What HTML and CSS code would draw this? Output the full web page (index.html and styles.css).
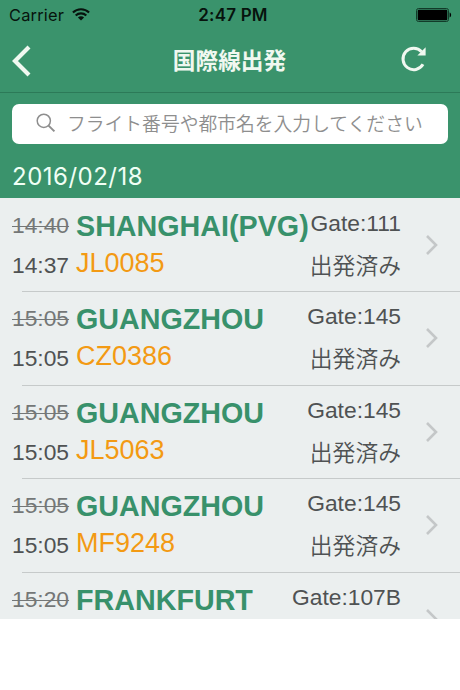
FILE: index.html
```html
<!DOCTYPE html>
<html lang="ja">
<head>
<meta charset="UTF-8">
<meta name="viewport" content="width=device-width, initial-scale=1.0">
<title>国際線出発</title>
<link rel="stylesheet" href="styles.css">
</head>
<body>
  <header>
    <div class="status-bar">
      <div class="carrier">
        <span>Carrier</span>
        <svg class="wifi" width="18" height="13" viewBox="0 0 18 13" fill="none" stroke="#07130d" stroke-width="2.1">
          <path d="M0.9 4.6a11.6 11.6 0 0 1 16.2 0"/>
          <path d="M3.7 7.5a7.6 7.6 0 0 1 10.6 0"/>
          <path d="M9 12.6L5.9 9.6a4.4 4.4 0 0 1 6.2 0z" fill="#07130d" stroke="none"/>
        </svg>
      </div>
      <span class="clock">2:47 PM</span>
      <svg class="battery" width="36" height="14" viewBox="0 0 36 14">
        <rect x="0.5" y="0.5" width="32" height="13" rx="2" fill="none" stroke="#123b29"/>
        <rect x="1.7" y="1.7" width="29.6" height="10.6" rx="1" fill="#000"/>
        <path d="M33.6 4.6c2 .6 2 4.2 0 4.8z" fill="#000"/>
      </svg>
    </div>
    <div class="nav-bar">
      <svg class="back" width="20" height="32" viewBox="0 0 20 32" fill="none" stroke="#f0f8f0" stroke-width="4.2">
        <path d="M18 2L4 16l14 14"/>
      </svg>
      <h1>国際線出発</h1>
      <svg class="refresh" width="28" height="28" viewBox="0 0 28 28" fill="none" stroke="#f0f8f0" stroke-width="3">
        <path d="M23 19.3A10.7 10.7 0 1 1 21.6 6.7"/>
        <path d="M25.6 2.2v8.2h-8.2z" fill="#f0f8f0" stroke="none"/>
      </svg>
    </div>
  </header>

  <div class="search-section">
    <div class="search-box">
      <svg width="20" height="20" viewBox="0 0 20 20" fill="none" stroke="#8e8e8e">
        <circle cx="7.8" cy="7.8" r="6.6" stroke-width="1.5"/>
        <path d="M12.6 12.6l5.8 5.8" stroke-width="2"/>
      </svg>
      <span>フライト番号や都市名を入力してください</span>
    </div>
  </div>
  <div class="date">2016/02/18</div>

  <div class="flight-list">
    <div class="flight">
      <div class="times"><s>14:40</s><span>14:37</span></div>
      <div class="info"><span class="city">SHANGHAI(PVG)</span><span class="number">JL0085</span></div>
      <div class="gate"><span>Gate:111</span><span class="state">出発済み</span></div>
      <svg class="arrow" width="14" height="22" viewBox="0 0 14 22"><path d="M2 2l9 9-9 9"/></svg>
    </div>
    <div class="flight">
      <div class="times"><s>15:05</s><span>15:05</span></div>
      <div class="info"><span class="city">GUANGZHOU</span><span class="number">CZ0386</span></div>
      <div class="gate"><span>Gate:145</span><span class="state">出発済み</span></div>
      <svg class="arrow" width="14" height="22" viewBox="0 0 14 22"><path d="M2 2l9 9-9 9"/></svg>
    </div>
    <div class="flight">
      <div class="times"><s>15:05</s><span>15:05</span></div>
      <div class="info"><span class="city">GUANGZHOU</span><span class="number">JL5063</span></div>
      <div class="gate"><span>Gate:145</span><span class="state">出発済み</span></div>
      <svg class="arrow" width="14" height="22" viewBox="0 0 14 22"><path d="M2 2l9 9-9 9"/></svg>
    </div>
    <div class="flight">
      <div class="times"><s>15:05</s><span>15:05</span></div>
      <div class="info"><span class="city">GUANGZHOU</span><span class="number">MF9248</span></div>
      <div class="gate"><span>Gate:145</span><span class="state">出発済み</span></div>
      <svg class="arrow" width="14" height="22" viewBox="0 0 14 22"><path d="M2 2l9 9-9 9"/></svg>
    </div>
    <div class="flight">
      <div class="times"><s>15:20</s></div>
      <div class="info"><span class="city">FRANKFURT</span></div>
      <div class="gate"><span>Gate:107B</span></div>
      <svg class="arrow" width="14" height="22" viewBox="0 0 14 22"><path d="M2 2l9 9-9 9"/></svg>
    </div>
  </div>
</body>
</html>
```
FILE: styles.css
```css
* {
  box-sizing: border-box;
}

body {
  margin: 0;
  background-color: #fff;
  font-family: "Liberation Sans", "Noto Sans CJK JP", sans-serif;
  overflow: hidden;
}

svg {
  display: block;
  flex: none;
}

header {
  height: 93px;
  background-color: #3a936c;
  border-bottom: 1px solid #2c7a58;
}

.status-bar {
  display: grid;
  grid-template-columns: 1fr auto 1fr;
  align-items: center;
  height: 30px;
  padding: 0 8px 0 9px;
  color: #07130d;
  font-family: Inter, sans-serif;
  font-size: 16.4px;
}

.carrier {
  display: flex;
  align-items: center;
  gap: 8px;
  letter-spacing: 0.2px;
}

.wifi {
  margin-top: -2px;
}

.clock {
  margin-left: 5px;
  font-weight: 600;
  font-size: 17px;
  letter-spacing: 0.2px;
}

.battery {
  justify-self: end;
}

.nav-bar {
  display: grid;
  grid-template-columns: 1fr auto 1fr;
  align-items: center;
  height: 62px;
  padding: 0 32px 0 11px;
}

.nav-bar h1 {
  margin: -2px 0 0 20px;
  color: #f0f8f0;
  font-family: "Noto Sans CJK JP", sans-serif;
  font-size: 22.7px;
  font-weight: 700;
  line-height: 30px;
}

.refresh {
  justify-self: end;
  margin-top: -4px;
}

.search-section {
  height: 62px;
  padding: 11px 12px 0;
  background-color: #3a936c;
}

.search-box {
  display: flex;
  align-items: center;
  gap: 11px;
  height: 40px;
  padding: 0 0 2px 24px;
  background-color: #fff;
  border-radius: 7px;
  color: #8e8e8e;
  font-family: "Noto Sans CJK JP", sans-serif;
  font-size: 18.8px;
  font-weight: 350;
  line-height: 28px;
  white-space: nowrap;
}

.date {
  height: 43px;
  padding-left: 12px;
  background-color: #3a936c;
  color: #f0fff5;
  font-family: Inter, sans-serif;
  font-size: 24px;
  letter-spacing: 0.5px;
  line-height: 43px;
}

.flight-list {
  height: 421px;
  background-color: #ebefef;
  overflow: hidden;
}

.flight {
  display: flex;
  position: relative;
  height: 93.4px;
  padding: 0 21px 0 12px;
  color: #4f5253;
  font-size: 22.8px;
}

/* separator is inset from the left edge */
.flight::after {
  content: "";
  position: absolute;
  left: 22px;
  right: 0;
  bottom: -1px;
  height: 1px;
  background-color: #c6caca;
}

.times,
.info,
.gate {
  display: flex;
  flex-direction: column;
  flex: none;
  white-space: nowrap;
}

.times {
  width: 64px;
  padding-top: 7px;
  line-height: 40px;
}

.times s {
  color: #747777;
  text-decoration-thickness: 1px;
}

.info {
  width: 220px;
  padding-top: 10px;
  line-height: 37px;
}

.city {
  color: #38916b;
  font-size: 28.7px;
  font-weight: 700;
}

.number {
  color: #f39a13;
  font-size: 27px;
}

.gate {
  align-items: flex-end;
  width: 80px;
  margin-left: auto;
  margin-right: 24px;
  padding-top: 4px;
  line-height: 42px;
}

.state {
  font-family: "Noto Sans CJK JP", sans-serif;
  font-weight: 350;
}

.arrow {
  margin-top: 36px;
  fill: none;
  stroke: #c4c7c8;
  stroke-width: 2.6;
}
```
